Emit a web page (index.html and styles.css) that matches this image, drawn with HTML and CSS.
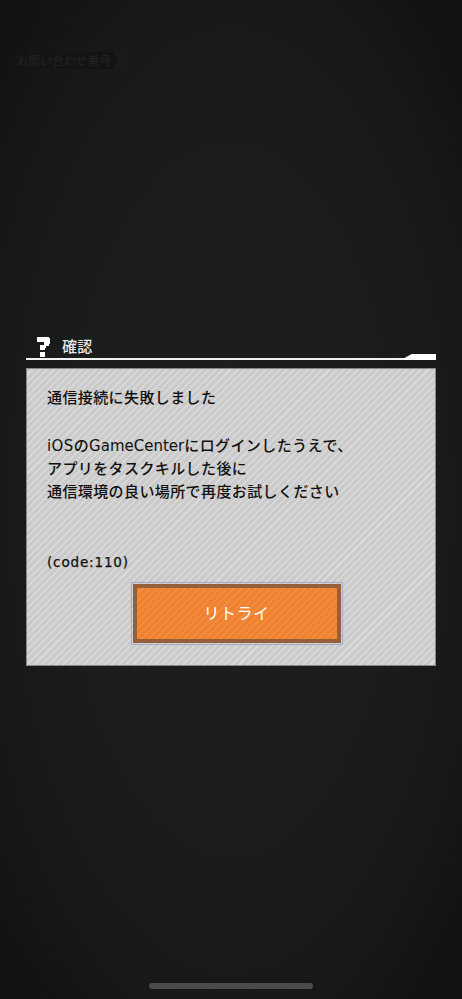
FILE: index.html
```html
<!DOCTYPE html>
<html lang="ja">
<head>
<meta charset="utf-8">
<title>確認</title>
<link rel="stylesheet" href="styles.css">
</head>
<body>
<main class="page">
  <div class="tag"><span class="tag-text">お問い合わせ番号</span></div>
  <section class="dialog">
    <header class="dialog-head">
      <svg class="q-icon" width="14" height="20" viewBox="0 0 14 20" aria-hidden="true">
        <path d="M1 0H13V1H14V7H13V9H10V11H9V13H4V8H8V5H1Z" fill="#fff"/>
        <rect x="4" y="15" width="5" height="5" fill="#fff"/>
      </svg>
      <h1 class="dialog-title">確認</h1>
    </header>
    <div class="dialog-rule"></div>
    <div class="dialog-body">
      <p class="msg first">通信接続に失敗しました</p>
      <p class="msg para">iOSの<span class="latin">GameCenter</span>にログインしたうえで、<br>アプリをタスクキルした後に<br>通信環境の良い場所で再度お試しください</p>
      <p class="code">(code:110)</p>
      <div class="btn-row">
        <button class="retry" type="button">リトライ</button>
      </div>
    </div>
  </section>
  <div class="home-bar"></div>
</main>
</body>
</html>
```
FILE: styles.css
```css
* { box-sizing: border-box; }
html, body { margin: 0; padding: 0; }
body {
  width: 462px;
  height: 999px;
  overflow: hidden;
  background: #111213;
  font-family: "DejaVu Sans", "Noto Sans CJK JP", sans-serif;
}
.page {
  height: 999px;
  display: flex;
  flex-direction: column;
  padding-top: 52px;
  background: radial-gradient(ellipse 310px 660px at 50% 50%, #1e1e1e 0%, #1c1d1d 45%, #171919 80%, #101213 100%);
}
.tag {
  width: 115px;
  height: 17px;
  margin-left: 14px;
  display: flex;
  background: #181a1b;
}
.tag-text {
  width: 104px;
  height: 17px;
  padding-left: 3px;
  font-family: "Noto Sans CJK JP", sans-serif;
  font-size: 11.5px;
  line-height: 17px;
  letter-spacing: 0.3px;
  color: #232424;
  white-space: nowrap;
  background: #131415;
  clip-path: polygon(0 0, 95% 0, 100% 50%, 95% 100%, 0 100%);
}
.dialog {
  margin: 267px 26px 0;
  width: 410px;
}
.dialog-head {
  height: 22px;
  display: flex;
  align-items: flex-start;
  padding-left: 10px;
}
.q-icon { flex: none; margin-top: 1px; }
.dialog-title {
  margin: 0 0 0 12px;
  font-family: "Noto Sans CJK JP", sans-serif;
  font-size: 15px;
  line-height: 19px;
  font-weight: 500;
  letter-spacing: 0.3px;
  color: #e8e8e8;
}
.dialog-rule {
  height: 2px;
  background: #f2f2f2;
  position: relative;
}
.dialog-rule::after {
  content: "";
  position: absolute;
  right: 0;
  bottom: 0;
  width: 32px;
  height: 6px;
  background: #fff;
  clip-path: polygon(24% 0, 100% 0, 100% 100%, 0 100%, 0 70%);
}
.dialog-body {
  margin-top: 8px;
  height: 298px;
  padding: 18px 20px 0;
  border: 1px solid #84888c;
  background: repeating-linear-gradient(135deg, #cbcbcb 0 3.5px, #dadada 3.5px 5px);
  color: #111;
}
.msg {
  margin: 0;
  font-size: 15px;
  font-weight: 500;
  letter-spacing: 0.4px;
  line-height: 23px;
}
.latin { letter-spacing: 0; }
.para { margin-top: 25px; }
.code {
  margin: 49px 0 0;
  font-size: 13.5px;
  line-height: 18px;
  font-weight: 400;
  letter-spacing: 0.85px;
  -webkit-text-stroke: 0.25px #111;
}
.btn-row {
  margin-top: 13px;
  display: flex;
  justify-content: center;
  padding-left: 11px;
}
.retry {
  width: 208px;
  height: 59px;
  padding: 0 0 4px;
  border: 4px solid #93603a;
  outline: 1px solid #a3abc9;
  outline-offset: 1px;
  background: repeating-linear-gradient(135deg, #ee8230 0 3.5px, #f28d41 3.5px 5px);
  color: #fff;
  font-family: "Noto Sans CJK JP", sans-serif;
  font-size: 16px;
  letter-spacing: 0.5px;
}
.home-bar {
  margin: auto auto 10px;
  width: 164px;
  height: 6px;
  border-radius: 3px;
  background: #4a4b4b;
}
```
